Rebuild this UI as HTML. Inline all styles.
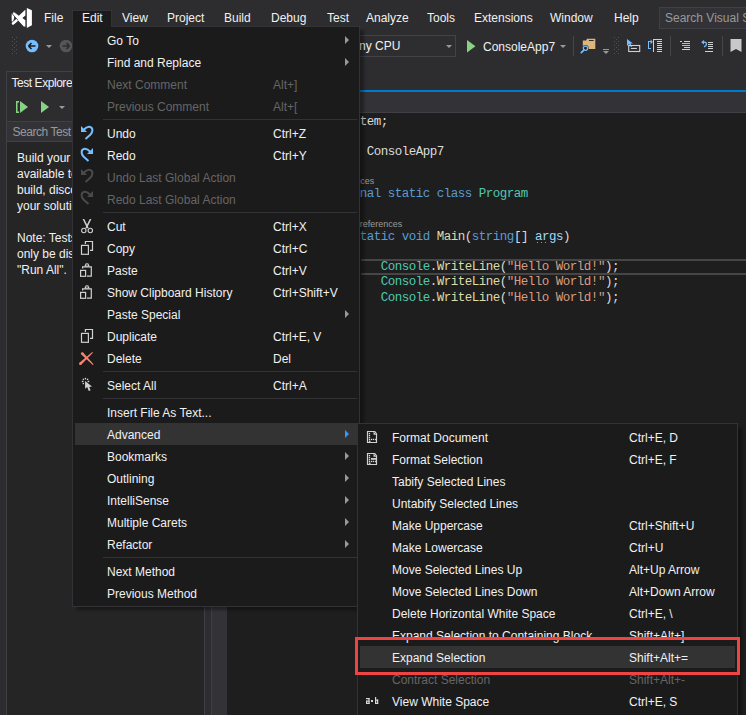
<!DOCTYPE html><html><head><meta charset="utf-8"><style>
*{margin:0;padding:0;box-sizing:border-box}
html,body{width:746px;height:715px;overflow:hidden;background:#2d2d30;font-family:"Liberation Sans",sans-serif;font-size:12px;color:#f1f1f1}
body{position:relative}
.a{position:absolute}
.tx{position:absolute;white-space:nowrap;line-height:22px}
.code{position:absolute;font-family:"Liberation Mono",monospace;font-size:12.5px;letter-spacing:-0.5px;line-height:15px;white-space:pre;color:#dcdcdc}
.lens{position:absolute;font-size:9px;line-height:12px;color:#999;white-space:nowrap}
.menu{position:absolute;background:#1b1b1c;border:1px solid #333337}
.dis{color:#656565}
.arr{position:absolute;width:0;height:0;border-left:4px solid #999;border-top:4px solid transparent;border-bottom:4px solid transparent}
</style></head><body>
<div class="a" style="left:72px;top:10px;width:40px;height:17px;background:#1b1b1c;border:1px solid #333337;border-bottom:none"></div>
<svg class="a" style="left:8px;top:4px" width="28" height="28" viewBox="0 0 28 28">
  <path d="M18.8,3.9 L23.9,6.3 L23.9,21.3 L18.8,23.9 Z" fill="#fff"/>
  <path d="M3.8,9.6 Q3.3,13.5 3.8,17.4 L4.8,17.4 Q7.6,13.5 4.8,9.6 Z" fill="#fff"/>
  <path d="M5,19.4 L10.8,14.6" stroke="#fff" stroke-width="2.6" stroke-linecap="round"/>
  <path d="M17.3,5.8 L17.3,11.6 L14.2,13.9 L17.3,16.3 L17.3,22.4 L15.9,22.6 L4.3,10 L5.6,7.6 L11.2,11.6 Z" fill="#fff" stroke="#2d2d30" stroke-width="0.7"/>
  <path d="M17.3,5.8 L17.3,11.6 L14.2,13.9 L17.3,16.3 L17.3,22.4 L15.9,22.6 L10,16.2 L11.2,11.6 Z" fill="#fff"/>
</svg>
<div class="tx" style="left:44px;top:6.84px;">File</div>
<div class="tx" style="left:82px;top:6.84px;">Edit</div>
<div class="tx" style="left:122px;top:6.84px;">View</div>
<div class="tx" style="left:167px;top:6.84px;">Project</div>
<div class="tx" style="left:224px;top:6.84px;">Build</div>
<div class="tx" style="left:271px;top:6.84px;">Debug</div>
<div class="tx" style="left:327px;top:6.84px;">Test</div>
<div class="tx" style="left:366px;top:6.84px;">Analyze</div>
<div class="tx" style="left:427px;top:6.84px;">Tools</div>
<div class="tx" style="left:474px;top:6.84px;">Extensions</div>
<div class="tx" style="left:550px;top:6.84px;">Window</div>
<div class="tx" style="left:614px;top:6.84px;">Help</div>
<div class="a" style="left:659px;top:7px;width:100px;height:22px;background:#333337;border:1px solid #3f3f46"></div>
<div class="tx" style="left:665px;top:6.84px;color:#999;">Search Visual Studio</div>
<svg class="a" style="left:0;top:0" width="18" height="60"><rect x="12" y="37" width="1" height="1" fill="#505053"/><rect x="12" y="41" width="1" height="1" fill="#505053"/><rect x="12" y="45" width="1" height="1" fill="#505053"/><rect x="12" y="49" width="1" height="1" fill="#505053"/><rect x="12" y="53" width="1" height="1" fill="#505053"/><rect x="16" y="37" width="1" height="1" fill="#505053"/><rect x="16" y="41" width="1" height="1" fill="#505053"/><rect x="16" y="45" width="1" height="1" fill="#505053"/><rect x="16" y="49" width="1" height="1" fill="#505053"/><rect x="16" y="53" width="1" height="1" fill="#505053"/><rect x="14" y="39" width="1" height="1" fill="#505053"/><rect x="14" y="43" width="1" height="1" fill="#505053"/><rect x="14" y="47" width="1" height="1" fill="#505053"/><rect x="14" y="51" width="1" height="1" fill="#505053"/></svg>
<svg class="a" style="left:25px;top:39px" width="14" height="14" viewBox="0 0 14 14">
<circle cx="7" cy="7" r="6.3" fill="#75beff"/>
<path d="M3.5,7 L10.5,7 M3.5,7 L6.5,4 M3.5,7 L6.5,10" stroke="#1e1e1e" stroke-width="1.6" fill="none"/></svg>
<div class="a" style="left:46px;top:45px;width:0;height:0;border-top:3px solid #999;border-left:3px solid transparent;border-right:3px solid transparent"></div>
<svg class="a" style="left:59px;top:39px" width="14" height="14" viewBox="0 0 14 14">
<circle cx="7" cy="7" r="6.3" fill="#555"/>
<path d="M3.5,7 L10.5,7 M10.5,7 L7.5,4 M10.5,7 L7.5,10" stroke="#2d2d30" stroke-width="1.6" fill="none"/></svg>
<div class="a" style="left:6px;top:71px;width:200px;height:644px;background:#2d2d30;border-left:1px solid #3f3f46;border-top:1px solid #3f3f46"></div>
<div class="tx" style="left:11.5px;top:72.14px;letter-spacing:-0.45px">Test Explorer</div>
<svg class="a" style="left:15px;top:100px" width="52" height="15" viewBox="0 0 52 15">
<path d="M1,1 L4,1 L4,2.5 L2.5,2.5 L2.5,11.5 L4,11.5 L4,13 L1,13 Z" fill="#89d185"/>
<path d="M5,1 L13,7 L5,13 Z" fill="#89d185"/>
<path d="M26,1 L34,7 L26,13 Z" fill="#89d185"/>
<path d="M44,6 L50,6 L47,9 Z" fill="#999"/>
</svg>
<div class="a" style="left:7px;top:121px;width:200px;height:21px;background:#333337;border-top:1px solid #3f3f46;border-bottom:1px solid #3f3f46"></div>
<div class="tx" style="left:12.5px;top:121.34px;color:#999;letter-spacing:-0.45px">Search Test Explorer</div>
<div class="a" style="left:7px;top:142px;width:197px;height:573px;background:#252526;"></div>
<div class="a" style="left:17px;top:149.84px;line-height:16px;white-space:nowrap">Build your solution to discover all</div>
<div class="a" style="left:17px;top:165.84px;line-height:16px;white-space:nowrap">available tests. Click "Run All" to</div>
<div class="a" style="left:17px;top:181.84px;line-height:16px;white-space:nowrap">build, discover, and run all tests in</div>
<div class="a" style="left:17px;top:197.84px;line-height:16px;white-space:nowrap">your solution.</div>
<div class="a" style="left:17px;top:229.84px;line-height:16px;white-space:nowrap">Note: Tests with parameters will</div>
<div class="a" style="left:17px;top:245.84px;line-height:16px;white-space:nowrap">only be discovered after clicking</div>
<div class="a" style="left:17px;top:261.84px;line-height:16px;white-space:nowrap">"Run All".</div>
<div class="a" style="left:204px;top:57px;width:1px;height:658px;background:#3f3f46;"></div>
<div class="a" style="left:205px;top:57px;width:6px;height:658px;background:#2d2d30;"></div>
<div class="a" style="left:211px;top:57px;width:1px;height:658px;background:#3f3f46;"></div>
<div class="a" style="left:212px;top:113px;width:15px;height:602px;background:#333337;"></div>
<div class="a" style="left:227px;top:113px;width:519px;height:602px;background:#1e1e1e;"></div>
<div class="a" style="left:212px;top:90px;width:534px;height:2px;background:#007acc;"></div>
<div class="a" style="left:212px;top:92px;width:534px;height:20px;background:#333337;"></div>
<div class="a" style="left:212px;top:112px;width:534px;height:1px;background:#3f3f46;"></div>
<div class="a" style="left:300px;top:35px;width:156px;height:22px;background:#2e2e31;border:1px solid #434346"></div>
<div class="tx" style="left:351px;top:34.84px;">Any CPU</div>
<div class="a" style="left:446px;top:45px;width:0;height:0;border-top:3px solid #999;border-left:3px solid transparent;border-right:3px solid transparent"></div>
<svg class="a" style="left:466px;top:40px" width="10" height="13"><path d="M1,0 L9.5,6.2 L1,12.4 Z" fill="#89d185"/></svg>
<div class="tx" style="left:483px;top:35.84px;">ConsoleApp7</div>
<div class="a" style="left:560px;top:45px;width:0;height:0;border-top:3px solid #999;border-left:3px solid transparent;border-right:3px solid transparent"></div>
<div class="a" style="left:573px;top:36px;width:1px;height:20px;background:#46464a;"></div>
<svg class="a" style="left:576px;top:34px" width="24" height="22" viewBox="576 34 24 22">
<path d="M582.8,40.6 L586.2,40.6 L587,38.8 L595.3,38.8 L595.3,49.1 L582.8,49.1 Z" fill="#dcb67a"/>
<rect x="588.9" y="40" width="4.8" height="1" fill="#2d2d30"/>
<circle cx="585.5" cy="48.3" r="3.2" fill="#2d2d30"/>
<circle cx="585.5" cy="48.3" r="2.1" fill="#1e1e1e" stroke="#75beff" stroke-width="1.3"/>
<path d="M583.8,50.1 L581.3,52.6" stroke="#75beff" stroke-width="1.7" stroke-linecap="round"/></svg>
<div class="a" style="left:603px;top:49px;width:6px;height:1px;background:#999;"></div>
<div class="a" style="left:603px;top:51px;width:0;height:0;border-top:3px solid #999;border-left:3px solid transparent;border-right:3px solid transparent"></div>
<svg class="a" style="left:0;top:0" width="620" height="60"><rect x="614" y="37" width="1" height="1" fill="#505053"/><rect x="614" y="41" width="1" height="1" fill="#505053"/><rect x="614" y="45" width="1" height="1" fill="#505053"/><rect x="614" y="49" width="1" height="1" fill="#505053"/><rect x="614" y="53" width="1" height="1" fill="#505053"/><rect x="618" y="37" width="1" height="1" fill="#505053"/><rect x="618" y="41" width="1" height="1" fill="#505053"/><rect x="618" y="45" width="1" height="1" fill="#505053"/><rect x="618" y="49" width="1" height="1" fill="#505053"/><rect x="618" y="53" width="1" height="1" fill="#505053"/><rect x="616" y="39" width="1" height="1" fill="#505053"/><rect x="616" y="43" width="1" height="1" fill="#505053"/><rect x="616" y="47" width="1" height="1" fill="#505053"/><rect x="616" y="51" width="1" height="1" fill="#505053"/></svg>
<svg class="a" style="left:626px;top:38px" width="16" height="16" viewBox="0 0 16 16">
<path d="M1,1 L1,8 L3,6 L5,9 L6,8.5 L4.5,5.5 L7,5.5 Z" fill="#75beff"/>
<rect x="2.7" y="7.5" width="11" height="6" fill="none" stroke="#d0d0d0" stroke-width="1.1"/>
<rect x="4.9" y="9.9" width="6" height="1.1" fill="#d0d0d0"/></svg>
<svg class="a" style="left:640px;top:30px" width="106" height="30" viewBox="640 30 106 30">
<g fill="#d0d0d0">
<rect x="653" y="39" width="1" height="13"/><rect x="653" y="39" width="9" height="1"/>
<rect x="657" y="41" width="5" height="1"/><rect x="657" y="43" width="5" height="1"/><rect x="657" y="45" width="5" height="1"/>
<rect x="657" y="47" width="5" height="1"/><rect x="657" y="49" width="5" height="1"/><rect x="657" y="51" width="5" height="1"/>
</g>
<g fill="#75beff">
<rect x="648" y="41" width="1" height="8"/><rect x="648" y="41" width="3" height="1"/><rect x="648" y="48" width="3" height="1"/>
<path d="M650.6,39.6 L652.8,41.9 L650.6,44.2 Z"/>
</g>
<g fill="#d0d0d0">
<rect x="680" y="41" width="2" height="1"/><rect x="684" y="41" width="6" height="1"/>
<rect x="684" y="47" width="6" height="1"/><rect x="682" y="49" width="8" height="1"/>
</g>
<g fill="#8ae28a"><rect x="682" y="43" width="8" height="1"/><rect x="682" y="45" width="8" height="1"/></g>
<path d="M701.2,42.2 L704,40 L704,44.4 Z" fill="#75beff"/>
<path d="M703,42.2 Q706.5,41.5 706.5,44 Q706.5,45.8 704,46.8" stroke="#75beff" stroke-width="1.3" fill="none"/>
<g fill="#d0d0d0">
<rect x="708" y="42" width="5" height="1"/><rect x="708" y="44" width="5" height="1"/><rect x="708" y="46" width="5" height="1"/>
<rect x="708" y="48" width="5" height="1"/><rect x="705" y="51" width="8" height="1"/>
</g>
</svg>
<div class="a" style="left:670px;top:36px;width:1px;height:20px;background:#46464a;"></div>
<div class="a" style="left:722px;top:36px;width:1px;height:20px;background:#46464a;"></div>
<svg class="a" style="left:730px;top:39px" width="12" height="14"><path d="M0.5,0 L11.5,0 L11.5,13 L6,10 L0.5,13 Z" fill="#c8c8c8"/></svg>
<div class="code" style="left:296.80px;top:114.97px"><span style="color:#569cd6">using</span> System;</div>
<div class="code" style="left:296.80px;top:144.97px"><span style="color:#569cd6">namespace</span> ConsoleApp7</div>
<div class="code" style="left:296.80px;top:159.97px">{</div>
<div class="lens" style="left:324.30px;top:174.50px">0 references</div>
<div class="code" style="left:324.80px;top:186.97px"><span style="color:#569cd6">internal static class</span> <span style="color:#4ec9b0">Program</span></div>
<div class="code" style="left:324.80px;top:201.97px">{</div>
<div class="lens" style="left:352.30px;top:217.50px">0 references</div>
<div class="code" style="left:352.80px;top:229.97px"><span style="color:#569cd6">static void</span> <span style="color:#dcdcaa">Main</span>(<span style="color:#569cd6">string</span>[] <span style="color:#9cdcfe">args</span>)</div>
<div class="a" style="left:537px;top:242px;width:1.2px;height:1.2px;background:#999;"></div>
<div class="a" style="left:541px;top:242px;width:1.2px;height:1.2px;background:#999;"></div>
<div class="a" style="left:545px;top:242px;width:1.2px;height:1.2px;background:#999;"></div>
<div class="code" style="left:352.80px;top:244.97px">{</div>
<div class="a" style="left:361px;top:259px;width:385px;height:2px;background:#464646;"></div>
<div class="a" style="left:361px;top:273px;width:385px;height:2px;background:#464646;"></div>
<div class="code" style="left:380.80px;top:259.97px"><span style="color:#4ec9b0">Console</span>.<span style="color:#dcdcaa">WriteLine</span>(<span style="color:#d69d85">"Hello World!"</span>);</div>
<div class="code" style="left:380.80px;top:275.47px"><span style="color:#4ec9b0">Console</span>.<span style="color:#dcdcaa">WriteLine</span>(<span style="color:#d69d85">"Hello World!"</span>);</div>
<div class="code" style="left:380.80px;top:290.97px"><span style="color:#4ec9b0">Console</span>.<span style="color:#dcdcaa">WriteLine</span>(<span style="color:#d69d85">"Hello World!"</span>);</div>
<div class="a" style="left:77px;top:30px;width:287px;height:580px;background:rgba(0,0,0,0.35);filter:blur(1.5px)"></div>
<div class="menu" style="left:72px;top:26px;width:288px;height:581px"></div>
<div class="a" style="left:73px;top:26px;width:38px;height:1px;background:#1b1b1c;"></div>
<div class="tx" style="left:107px;top:29.74px;">Go To</div>
<div class="arr" style="left:345px;top:36px;border-left-color:#999"></div>
<div class="tx" style="left:107px;top:51.74px;">Find and Replace</div>
<div class="arr" style="left:345px;top:58px;border-left-color:#999"></div>
<div class="tx" style="left:107px;top:73.74px;color:#656565;">Next Comment</div>
<div class="tx" style="left:273px;top:73.74px;color:#656565;">Alt+]</div>
<div class="tx" style="left:107px;top:95.74px;color:#656565;">Previous Comment</div>
<div class="tx" style="left:273px;top:95.74px;color:#656565;">Alt+[</div>
<div class="a" style="left:103px;top:119px;width:254px;height:1px;background:#333337;"></div>
<div class="tx" style="left:107px;top:122.74px;">Undo</div>
<div class="tx" style="left:273px;top:122.74px;">Ctrl+Z</div>
<div class="tx" style="left:107px;top:144.74px;">Redo</div>
<div class="tx" style="left:273px;top:144.74px;">Ctrl+Y</div>
<div class="tx" style="left:107px;top:166.74px;color:#656565;">Undo Last Global Action</div>
<div class="tx" style="left:107px;top:188.74px;color:#656565;">Redo Last Global Action</div>
<div class="a" style="left:103px;top:212px;width:254px;height:1px;background:#333337;"></div>
<div class="tx" style="left:107px;top:215.74px;">Cut</div>
<div class="tx" style="left:273px;top:215.74px;">Ctrl+X</div>
<div class="tx" style="left:107px;top:237.74px;">Copy</div>
<div class="tx" style="left:273px;top:237.74px;">Ctrl+C</div>
<div class="tx" style="left:107px;top:259.74px;">Paste</div>
<div class="tx" style="left:273px;top:259.74px;">Ctrl+V</div>
<div class="tx" style="left:107px;top:281.74px;">Show Clipboard History</div>
<div class="tx" style="left:273px;top:281.74px;">Ctrl+Shift+V</div>
<div class="tx" style="left:107px;top:303.74px;">Paste Special</div>
<div class="arr" style="left:345px;top:310px;border-left-color:#999"></div>
<div class="tx" style="left:107px;top:325.74px;">Duplicate</div>
<div class="tx" style="left:273px;top:325.74px;">Ctrl+E, V</div>
<div class="tx" style="left:107px;top:347.74px;">Delete</div>
<div class="tx" style="left:273px;top:347.74px;">Del</div>
<div class="a" style="left:103px;top:371px;width:254px;height:1px;background:#333337;"></div>
<div class="tx" style="left:107px;top:374.74px;">Select All</div>
<div class="tx" style="left:273px;top:374.74px;">Ctrl+A</div>
<div class="a" style="left:103px;top:398px;width:254px;height:1px;background:#333337;"></div>
<div class="tx" style="left:107px;top:401.74px;">Insert File As Text...</div>
<div class="a" style="left:75px;top:423px;width:282px;height:22px;background:#333334;"></div>
<div class="tx" style="left:107px;top:423.74px;">Advanced</div>
<div class="arr" style="left:345px;top:430px;border-left-color:#3399ff"></div>
<div class="tx" style="left:107px;top:445.74px;">Bookmarks</div>
<div class="arr" style="left:345px;top:452px;border-left-color:#999"></div>
<div class="tx" style="left:107px;top:467.74px;">Outlining</div>
<div class="arr" style="left:345px;top:474px;border-left-color:#999"></div>
<div class="tx" style="left:107px;top:489.74px;">IntelliSense</div>
<div class="arr" style="left:345px;top:496px;border-left-color:#999"></div>
<div class="tx" style="left:107px;top:511.74px;">Multiple Carets</div>
<div class="arr" style="left:345px;top:518px;border-left-color:#999"></div>
<div class="tx" style="left:107px;top:533.74px;">Refactor</div>
<div class="arr" style="left:345px;top:540px;border-left-color:#999"></div>
<div class="a" style="left:103px;top:557px;width:254px;height:1px;background:#333337;"></div>
<div class="tx" style="left:107px;top:560.74px;">Next Method</div>
<div class="tx" style="left:107px;top:582.74px;">Previous Method</div>
<svg class="a" style="left:78px;top:122px" width="20" height="20" viewBox="0 0 20 20"><g>
<path d="M3,4 L3,10 L9,10 Z" fill="#75beff"/>
<path d="M5.5,8 Q8.5,4.5 11.5,4.8 Q14.8,5.5 14.3,9 Q14,11 12,13 L7.5,17" stroke="#75beff" stroke-width="2" fill="none"/></g></svg>
<svg class="a" style="left:76px;top:144px" width="20" height="20" viewBox="0 0 20 20"><g transform="translate(20,0) scale(-1,1)">
<path d="M3,4 L3,10 L9,10 Z" fill="#75beff"/>
<path d="M5.5,8 Q8.5,4.5 11.5,4.8 Q14.8,5.5 14.3,9 Q14,11 12,13 L7.5,17" stroke="#75beff" stroke-width="2" fill="none"/></g></svg>
<svg class="a" style="left:78px;top:165px" width="20" height="20" viewBox="0 0 20 20"><g>
<path d="M3,4 L3,10 L9,10 Z" fill="#4a4a4a"/>
<path d="M5.5,8 Q8.5,4.5 11.5,4.8 Q14.8,5.5 14.3,9 Q14,11 12,13 L7.5,17" stroke="#4a4a4a" stroke-width="2" fill="none"/></g></svg>
<svg class="a" style="left:76px;top:187px" width="20" height="20" viewBox="0 0 20 20"><g transform="translate(20,0) scale(-1,1)">
<path d="M3,4 L3,10 L9,10 Z" fill="#4a4a4a"/>
<path d="M5.5,8 Q8.5,4.5 11.5,4.8 Q14.8,5.5 14.3,9 Q14,11 12,13 L7.5,17" stroke="#4a4a4a" stroke-width="2" fill="none"/></g></svg>
<svg class="a" style="left:78px;top:216px" width="18" height="20" viewBox="0 0 18 20">
<path d="M4.6,3 L6.2,3 L9,8.6 L11.8,3 L13.4,3 L9.9,10.3 L10.6,12.2 L7.4,12.2 L8.1,10.3 Z" fill="#d0d0d0"/>
<circle cx="5.8" cy="14.5" r="2.2" stroke="#d0d0d0" stroke-width="1.1" fill="none"/>
<circle cx="12.3" cy="14.5" r="2.2" stroke="#d0d0d0" stroke-width="1.1" fill="none"/></svg>
<svg class="a" style="left:78px;top:238px" width="18" height="20" viewBox="0 0 18 20">
<path d="M7.4,5.9 L7.4,3.5 L14.5,3.5 L14.5,12.4 L12,12.4" stroke="#d0d0d0" stroke-width="1.2" fill="none"/>
<rect x="3.5" y="7.4" width="6.9" height="8.9" stroke="#d0d0d0" stroke-width="1.2" fill="none"/></svg>
<svg class="a" style="left:78px;top:326px" width="18" height="20" viewBox="0 0 18 20">
<path d="M7.4,5.9 L7.4,3.5 L14.5,3.5 L14.5,12.4 L12,12.4" stroke="#d0d0d0" stroke-width="1.2" fill="none"/>
<rect x="3.5" y="7.4" width="6.9" height="8.9" stroke="#d0d0d0" stroke-width="1.2" fill="none"/></svg>
<svg class="a" style="left:78px;top:260px" width="18" height="20" viewBox="0 0 18 20">
<path d="M4.6,8.6 L4.6,6.8 L13.3,6.8 L13.3,16.2 L9,16.2" stroke="#d0d0d0" stroke-width="1.2" fill="none"/>
<path d="M6.3,6.6 L7.6,3.6 Q9,2.8 10.4,3.6 L11.7,6.6 Z" fill="#d0d0d0"/><circle cx="9" cy="5" r="0.85" fill="#1b1b1c"/>
<rect x="2.6" y="10.4" width="5" height="5.9" stroke="#d0d0d0" stroke-width="1.2" fill="none"/></svg>
<svg class="a" style="left:78px;top:282px" width="18" height="20" viewBox="0 0 18 20">
<path d="M4.6,8.6 L4.6,6.8 L13.3,6.8 L13.3,16.2 L9,16.2" stroke="#d0d0d0" stroke-width="1.2" fill="none"/>
<path d="M6.3,6.6 L7.6,3.6 Q9,2.8 10.4,3.6 L11.7,6.6 Z" fill="#d0d0d0"/><circle cx="9" cy="5" r="0.85" fill="#1b1b1c"/>
<rect x="2.6" y="10.4" width="5" height="5.9" stroke="#d0d0d0" stroke-width="1.2" fill="none"/></svg>
<svg class="a" style="left:76px;top:348px" width="22" height="22" viewBox="0 0 22 22"><g fill="#f48771">
<path d="M5.3,6.4 L7.1,4.6 L17.55,16.25 L16.85,16.95 Z"/><circle cx="6.2" cy="5.5" r="1.3"/>
<path d="M3.42,14.75 L5.18,16.65 L16.94,4.67 L16.26,3.93 Z"/><circle cx="4.3" cy="15.7" r="1.3"/>
</g></svg>
<svg class="a" style="left:78px;top:374px" width="18" height="20" viewBox="0 0 18 20">
<path d="M7.1,7 L7.1,14.8 L9.2,13.1 L10.8,16.9 L12.6,16.3 L11.2,12.9 L14,12.6 Z" fill="#d0d0d0"/>
<g fill="#d8d8d8"><rect x="4.7" y="4.7" width="1.3" height="1.3"/><rect x="6.8" y="3.8" width="1.3" height="1.6"/><rect x="8.9" y="4.7" width="1.3" height="1.3"/>
<rect x="3.8" y="6.8" width="1.6" height="1.3"/><rect x="9.6" y="6.8" width="1.6" height="1.3"/><rect x="4.7" y="8.9" width="1.3" height="1.3"/></g></svg>
<div class="a" style="left:362px;top:428px;width:380px;height:300px;background:rgba(0,0,0,0.35);filter:blur(1.5px)"></div>
<div class="menu" style="left:357px;top:423px;width:381px;height:300px"></div>
<div class="tx" style="left:392px;top:426.74px;">Format Document</div>
<div class="tx" style="left:629px;top:426.74px;">Ctrl+E, D</div>
<div class="tx" style="left:392px;top:448.74px;">Format Selection</div>
<div class="tx" style="left:629px;top:448.74px;">Ctrl+E, F</div>
<div class="tx" style="left:392px;top:470.74px;">Tabify Selected Lines</div>
<div class="tx" style="left:392px;top:492.74px;">Untabify Selected Lines</div>
<div class="tx" style="left:392px;top:514.74px;">Make Uppercase</div>
<div class="tx" style="left:629px;top:514.74px;">Ctrl+Shift+U</div>
<div class="tx" style="left:392px;top:536.74px;">Make Lowercase</div>
<div class="tx" style="left:629px;top:536.74px;">Ctrl+U</div>
<div class="tx" style="left:392px;top:558.74px;">Move Selected Lines Up</div>
<div class="tx" style="left:629px;top:558.74px;">Alt+Up Arrow</div>
<div class="tx" style="left:392px;top:580.74px;">Move Selected Lines Down</div>
<div class="tx" style="left:629px;top:580.74px;">Alt+Down Arrow</div>
<div class="tx" style="left:392px;top:602.74px;">Delete Horizontal White Space</div>
<div class="tx" style="left:629px;top:602.74px;">Ctrl+E, \</div>
<div class="tx" style="left:392px;top:624.74px;">Expand Selection to Containing Block</div>
<div class="tx" style="left:629px;top:624.74px;">Shift+Alt+]</div>
<div class="a" style="left:360px;top:646px;width:375px;height:22px;background:#333334;"></div>
<div class="tx" style="left:392px;top:646.74px;">Expand Selection</div>
<div class="tx" style="left:629px;top:646.74px;">Shift+Alt+=</div>
<div class="tx" style="left:392px;top:668.74px;color:#656565;">Contract Selection</div>
<div class="tx" style="left:629px;top:668.74px;color:#656565;">Shift+Alt+-</div>
<div class="tx" style="left:392px;top:690.74px;">View White Space</div>
<div class="tx" style="left:629px;top:690.74px;">Ctrl+E, S</div>
<svg class="a" style="left:364px;top:429px" width="16" height="16" viewBox="0 0 16 16">
<path d="M3.5,2.5 L10.8,2.5 L12.5,4.6 L12.5,13.5 L3.5,13.5 Z" stroke="#d0d0d0" stroke-width="1.2" fill="none"/>
<path d="M9.5,2.5 L12.5,5.8 L9.5,5.8 Z" fill="#d0d0d0"/>
<rect x="4.9" y="11.6" width="1.6" height="1.4" fill="#d0d0d0"/><rect x="11" y="9.8" width="1" height="1.4" fill="#d0d0d0"/>
<rect x="4.8" y="3.9" width="1.3" height="1.3" fill="#e0e0e0"/><rect x="4.8" y="5.9" width="1.3" height="1.3" fill="#e0e0e0"/><rect x="4.8" y="7.9" width="1.3" height="1.3" fill="#e0e0e0"/><rect x="4.8" y="9.8" width="1.3" height="1.3" fill="#e0e0e0"/><rect x="6.9" y="9.8" width="1.3" height="1.3" fill="#e0e0e0"/><rect x="8.9" y="9.8" width="1.3" height="1.3" fill="#e0e0e0"/></svg>
<svg class="a" style="left:364px;top:451px" width="16" height="16" viewBox="0 0 16 16">
<path d="M3.5,2.5 L10.8,2.5 L12.5,4.6 L12.5,13.5 L3.5,13.5 Z" stroke="#d0d0d0" stroke-width="1.2" fill="none"/>
<path d="M9.5,2.5 L12.5,5.8 L9.5,5.8 Z" fill="#d0d0d0"/>
<rect x="4.9" y="11.6" width="1.6" height="1.4" fill="#d0d0d0"/><rect x="11" y="9.8" width="1" height="1.4" fill="#d0d0d0"/>
<rect x="4.8" y="3.9" width="1.3" height="1.3" fill="#e0e0e0"/><rect x="4.8" y="5.9" width="1.3" height="1.3" fill="#e0e0e0"/><rect x="4.8" y="7.9" width="1.3" height="1.3" fill="#e0e0e0"/><rect x="4.8" y="9.8" width="1.3" height="1.3" fill="#e0e0e0"/><rect x="6.9" y="9.8" width="1.3" height="1.3" fill="#e0e0e0"/><rect x="8.9" y="9.8" width="1.3" height="1.3" fill="#e0e0e0"/><rect x="7" y="7" width="5.8" height="1.8" fill="#d0d0d0"/></svg>
<svg class="a" style="left:362px;top:692px" width="20" height="16" viewBox="362 692 20 16"><g fill="#d8d8d8">
<rect x="366" y="698" width="3.6" height="1.2"/><rect x="368.4" y="698" width="1.2" height="6"/><rect x="366" y="700.6" width="3.6" height="1.1"/>
<rect x="366" y="700.6" width="1.2" height="3.4"/><rect x="366" y="702.8" width="3.6" height="1.2"/>
<rect x="371" y="700" width="2" height="2"/>
<rect x="375" y="697" width="1.2" height="7"/><rect x="375" y="699.6" width="3.2" height="1.2"/><rect x="377" y="699.6" width="1.2" height="4.4"/><rect x="375" y="702.8" width="3.2" height="1.2"/>
</g></svg>
<div class="a" style="left:355px;top:637px;width:385px;height:38px;border:3px solid #ee4444"></div>
</body></html>
